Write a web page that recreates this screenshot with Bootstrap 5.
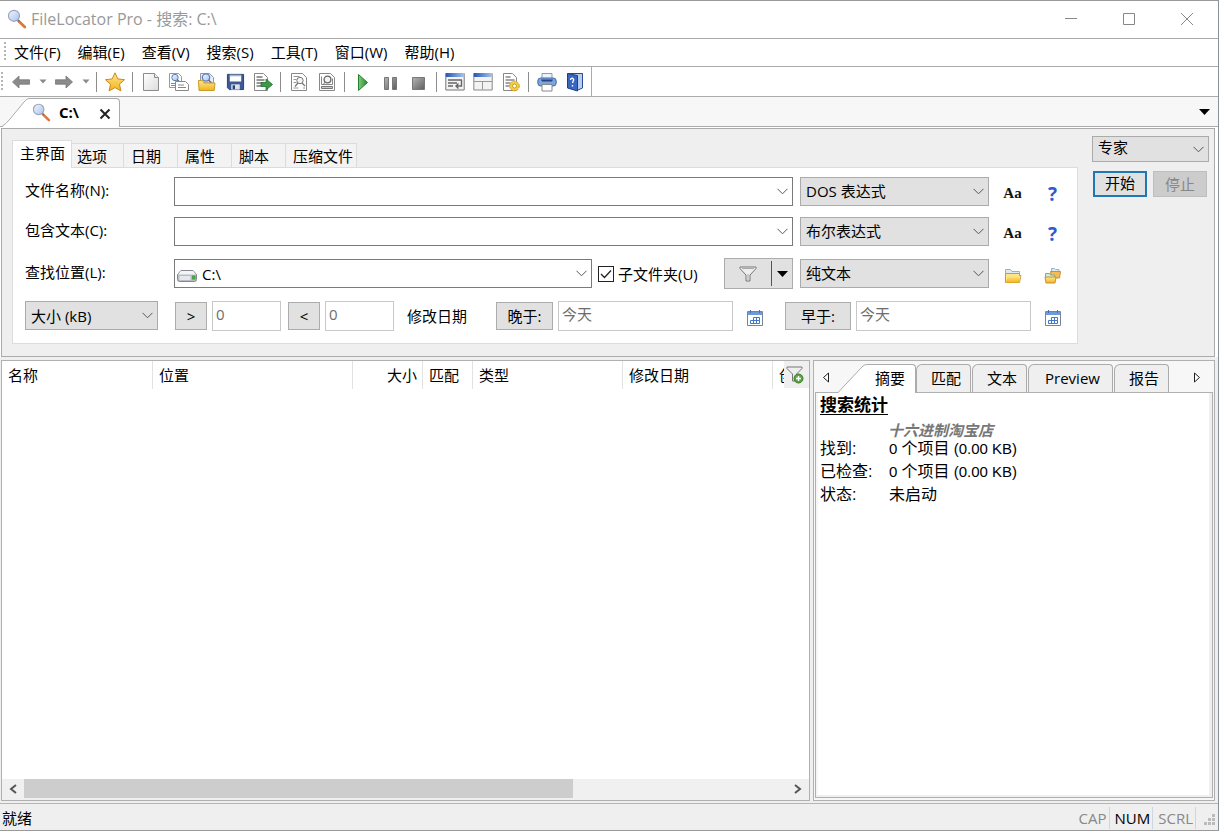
<!DOCTYPE html>
<html lang="zh-CN">
<head>
<meta charset="utf-8">
<meta name="viewport" content="width=device-width, initial-scale=1">
<title>FileLocator Pro - 搜索: C:\</title>
<link href="https://cdn.jsdelivr.net/npm/bootstrap@5.3.0/dist/css/bootstrap.min.css" rel="stylesheet">
<style>
:root { --edge:#ababab; --face:#efefef; --ctl:#e1e1e1; }
body { font:15px/20px "Open Sans","Noto Sans CJK SC",sans-serif; color:#000; background:#fff; }
button, input, select { font:inherit; color:#000; border-radius:0; }
svg { display:block; flex:none; }
.app { min-height:100vh; border:1px solid #999; border-left:0; border-right-color:#8a8f98; }
.bare { background:none; border:0; padding:0; display:flex; align-items:center; justify-content:center; }
/* title, menu and tool bars */
.title-bar { height:38px; padding:0 2px 2px 7px; color:#999; border-bottom:1px solid var(--edge); }
.app-title { font-size:16px; }
.title-bar .bare { width:58px; height:36px; }
.menu-bar { height:28px; border-bottom:1px solid var(--edge); gap:17px; padding:0 0 2px 4px; }
.menu-bar a { color:#000; text-decoration:none; }
.menu-bar .grip { margin-right:-9px; }
.grip { width:2px; height:20px; background:repeating-linear-gradient(#b5b5b5 0 2px,transparent 2px 4px); flex:none; }
.tool-bar { height:30px; border-bottom:1px solid var(--edge); }
.tool-set { height:29px; padding:0 2px 0 1px; border-right:1px solid var(--edge); }
.tool-set .bare { width:28px; height:28px; }
.tool-set .bare.drop { width:15px; }
.vsep { width:1px; height:20px; margin:0 4px 0 3px; background:#8c8c8c; flex:none; }
/* slanted document tab */
.doc-bar { height:30px; background:#f7f7f7; border-bottom:1px solid var(--edge); padding:1px 8px 0 2px; }
.slant-body { background:#fff; border:1px solid var(--edge); border-width:1px 1px 0 0; border-radius:0 4px 0 0; }
.doc-tab { height:29px; margin-bottom:-1px; }
.doc-tab .slant-body { width:91px; height:29px; padding-bottom:2px; }
/* criteria */
.search-area { background:var(--face); border:1px solid var(--edge); margin:1px 3px 0 1px; padding:7px 5px 12px 10px; gap:14px; }
.crit-tabs { height:31px; padding-top:7px; }
.crit-tabs .form-tab { height:24px; padding:0 3px 0 7px; min-width:54px; text-align:left; background:#f3f3f3; border:1px solid #dcdcdc; border-width:1px 1px 0 0; }
.crit-tabs .form-tab.active { min-width:60px; height:28px; background:#fff; border-left-width:1px; padding:0 4px 3px 7px; margin:-3px -2px 0 0; position:relative; }
.crit-box { background:#fff; border:1px solid #dcdcdc; padding:9px 6px 13px 12px; gap:11px; }
.crit-row { height:29px; }
.crit-row.loose { margin-top:2px; }
.row-label { width:149px; padding-bottom:3px; flex:none; }
.combo { height:29px; border:1px solid #7a7a7a; background:#fff; }
.combo input { border:0; outline:0; padding:0 6px; min-width:0; height:26px; background:transparent; }
.combo .bare { width:20px; }
.pick { appearance:none; border:1px solid var(--edge); background:var(--ctl) url("data:image/svg+xml,%3Csvg xmlns='http://www.w3.org/2000/svg' width='11' height='7'%3E%3Cpath d='M.5 .8l5 5 5-5' fill='none' stroke='%23555'/%3E%3C/svg%3E") no-repeat right 4px center; height:29px; padding:0 18px 0 5px; flex:none; }
.pick.mode { width:189px; margin:0 2px 0 7px; padding-bottom:2px; }
.push { background:var(--ctl); border:1px solid #acacac; height:28px; padding:0; flex:none; }
.crit-row .cell { width:40px; flex:none; height:29px; padding:4px 0 0 3px; }
.aa { font:bold 15px "Liberation Serif",serif; color:#111; }
.quest { font:bold 19px "Open Sans",sans-serif; color:#2f5bd0; }
.field { border:1px solid #c8c8c8; background:#fff; height:30px; padding:0 3px 4px; color:#6d6d6d; }
.field::placeholder { color:#6d6d6d; opacity:1; }
.tick { appearance:none; width:16px; height:16px; margin:0; border:1px solid #222; background:#fff; flex:none; }
.tick:checked { background:#fff url("data:image/svg+xml,%3Csvg xmlns='http://www.w3.org/2000/svg' width='14' height='14'%3E%3Cpath d='M2 7l3.5 3.5L12 3.5' fill='none' stroke='%23222' stroke-width='1.3'/%3E%3C/svg%3E") center no-repeat; }
.side { width:117px; flex:none; }
.side .pick { height:26px; padding-bottom:4px; }
.start { width:54px; height:26px; border:2px solid #2077b5; padding-bottom:2px; }
.stop { width:54px; height:26px; background:#ccc; border:1px solid #bfbfbf; color:#888; }
/* results */
.work { background:var(--face); padding:3px 3px 2px 1px; gap:3px; min-height:300px; }
.results { border:1px solid #b0b0b0; background:#fff; min-width:0; }
.head-wrap { position:relative; height:28px; overflow:hidden; }
.cols { table-layout:fixed; width:100%; border-collapse:separate; border-spacing:0; }
.cols th { font-weight:400; height:28px; padding:0 5px 0 6px; border-right:1px solid #e2e2e2; white-space:nowrap; overflow:hidden; }
.cols th:last-child { border:0; }
.filter-btn { position:absolute; right:0; top:0; width:25px; height:27px; padding-right:3px; background:var(--face) !important; }
.hscroll { height:21px; background:#f0f0f0; }
.hscroll .bare { width:22px; height:19px; }
.track { height:19px; }
.thumb { width:72%; height:19px; background:#cdcdcd; }
.preview { width:402px; border:1px solid #b0b0b0; background:#f7f7f7; flex:none; }
.pv-tabs { height:31px; padding-top:3px; }
.pv-tab { height:28px; background:var(--face); border:1px solid var(--edge); border-bottom:0; border-radius:6px 4px 0 0; padding:0 9px 2px 14px; margin-right:1px; }
.pv-tab.roomy { padding:0 12px 2px 16px; }
.pv-tabs .slant-body { height:29px; width:49px; border-bottom:0; padding:0 0 3px 8px; text-align:left; }
.pv-body { border:1px solid #b0b0b0; margin:0 1px 2px 1px; background:#fff; padding:1px 4px; font:15px/23px "Liberation Sans","Noto Sans CJK SC",sans-serif; box-shadow:inset -3px -2px 0 var(--face), inset 2px 0 0 #f5f5f5; }
.pv-body h2 { font:bold 17px/20px "Noto Sans CJK SC",sans-serif; text-decoration:underline; text-underline-offset:3px; margin:0 0 9px; }
.pv-note { font:italic bold 15px/14px "Noto Sans CJK SC",sans-serif; color:#777; padding-left:68px; }
.han { font-size:16px; }
.stats { display:grid; grid-template-columns:69px 1fr; margin:0; }
.stats dt { font-weight:400; font-size:16px; }
.stats dd { margin:0; }
.status { height:27px; background:var(--face); border-top:1px solid #b5b5b5; padding:2px 2px 0; }
.flag { color:#888; padding:0 2px 0 5px; border-right:1px solid #cfd5de; height:22px; line-height:22px; }
.flag.on { color:#000; }
</style>
</head>
<body>
<svg width="0" height="0" class="position-absolute" aria-hidden="true">
  <defs>
    <linearGradient id="gLens" x2="1" y2="1"><stop stop-color="#f2f6ff"/><stop offset="1" stop-color="#a9c2ec"/></linearGradient>
    <linearGradient id="gGray" x2="1" y2="1"><stop stop-color="#b5b5b5"/><stop offset="1" stop-color="#5e5e5e"/></linearGradient>
    <linearGradient id="gGold" x2="0" y2="1"><stop stop-color="#ffe98a"/><stop offset="1" stop-color="#f3b21c"/></linearGradient>
    <linearGradient id="gGreen" x2="1" y2="0"><stop stop-color="#83c983"/><stop offset="1" stop-color="#248a24"/></linearGradient>
    <linearGradient id="gPage" x2="1" y2="1"><stop stop-color="#fff"/><stop offset="1" stop-color="#dcdcdc"/></linearGradient>
    <linearGradient id="gBlue" x2="1"><stop stop-color="#2456b4"/><stop offset="1" stop-color="#a8c3ef"/></linearGradient>
  </defs>
  <symbol id="lens" viewBox="0 0 20 20"><path d="M11.500 12l6.300 6" stroke="#d9793c" stroke-width="2.800" stroke-linecap="round"/><path d="M10.500 10.500l2 2" stroke="#777" stroke-width="1.500"/><circle cx="7" cy="6.800" r="5.500" fill="url(#gLens)" stroke="#9aa4ba" stroke-width="1.200"/></symbol>
  <symbol id="back" viewBox="0 0 20 20"><path d="M1.500 10L8 4v3.800h10.500v4.400H8V16z" fill="#8b8b8b" stroke="#777" stroke-width=".8"/></symbol>
  <symbol id="fwd" viewBox="0 0 20 20"><path d="M18.500 10L12 4v3.800H1.500v4.400H12V16z" fill="#8b8b8b" stroke="#777" stroke-width=".8"/></symbol>
  <symbol id="caret" viewBox="0 0 8 5"><path d="M.5 .5h7L4 4.500z" fill="#8a8a8a"/></symbol>
  <symbol id="star" viewBox="0 0 20 20"><path d="M10 .8l2.800 6.100 6.700.8-5 4.500 1.400 6.700L10 15.600l-5.900 3.300 1.400-6.700-5-4.500 6.700-.8z" fill="url(#gGold)" stroke="#c98a17"/></symbol>
  <symbol id="page" viewBox="0 0 20 20"><path d="M2.500 1.500h11l4 4v13h-15z" fill="url(#gPage)" stroke="#8b8b8b"/><path d="M13.500 1.500v4h4" fill="#eee" stroke="#8b8b8b"/></symbol>
  <symbol id="pagefind" viewBox="0 0 20 20"><path d="M.5 1.500h9l3 3v11h-12z" fill="#fff" stroke="#999"/><path d="M2 11.500h4M2 13.500h4" stroke="#888"/><circle cx="6" cy="5.500" r="3.200" fill="url(#gLens)" stroke="#5a7db8"/><path d="M8.300 7.800l2 2" stroke="#5a6a8a" stroke-width="1.500"/><path d="M6.500 9.500h10l3 3v6h-13z" fill="#fff" stroke="#888"/><path d="M9 13h6M9 15.500h8" stroke="#888"/></symbol>
  <symbol id="folderfind" viewBox="0 0 20 20"><path d="M3.500 11V1.500h9l4 4V11z" fill="#e8eefb" stroke="#999"/><circle cx="9" cy="5.500" r="3.700" fill="url(#gLens)" stroke="#5b7fc4" stroke-width="1.300"/><path d="M11.500 8l3 3" stroke="#667" stroke-width="1.500"/><path d="M2 18.500l-.5-10h4l1.500 2.500h11l-.8 7.500z" fill="url(#gGold)" stroke="#c99b2e"/></symbol>
  <symbol id="floppy" viewBox="0 0 20 20"><path d="M1.500 2.500h17v16h-15l-2-2z" fill="#3d5a96" stroke="#283e6b"/><path d="M4 3h12v7H4z" fill="#fff"/><path d="M4 3h12v1.500H4z" fill="#9bb4de"/><path d="M5.500 13h9v5.500h-9z" fill="#dce2ec"/><path d="M7 14h2.500v4H7z" fill="#2a3f6c"/></symbol>
  <symbol id="export" viewBox="0 0 20 20"><path d="M1.500 1.500h9l4 4v13h-13z" fill="#fff" stroke="#888"/><path d="M3.500 5h6M3.500 8h8M3.500 11h7M3.500 14h7" stroke="#777" stroke-width="1.300"/><path d="M8 10.500h5V7l6.500 5.500L13 18v-3.500H8z" fill="#3a9a45" stroke="#227230" stroke-width=".8"/></symbol>
  <symbol id="pgmag" viewBox="0 0 20 20"><path d="M2.500 1.500h11l4 4v13h-15z" fill="#fff" stroke="#888"/><path d="M4.500 4.500h6M4.500 7.500h3M4.500 10.500h3M4.500 16h5M14 16h2" stroke="#999"/><circle cx="11" cy="8.500" r="3.200" fill="#f4f4f4" stroke="#777"/><path d="M9 11l-3 3.500M13 11l3 3" stroke="#777" stroke-width="1.300"/></symbol>
  <symbol id="pgmag2" viewBox="0 0 20 20"><path d="M2.500 1.500h11l4 4v13h-15z" fill="#fff" stroke="#888"/><path d="M4.500 4.500v8h11v-6" fill="none" stroke="#888"/><circle cx="10.500" cy="7.500" r="3.400" fill="#f4f4f4" stroke="#666" stroke-width="1.300"/><path d="M8.500 10L6 12.500M4.500 14.500h11v2h-11z" stroke="#777" fill="#ccc"/></symbol>
  <symbol id="play" viewBox="0 0 20 20"><path d="M5.500 2.500l9 8-9 8z" fill="url(#gGreen)" stroke="#277f2b"/></symbol>
  <symbol id="pause" viewBox="0 0 20 20"><path d="M3.500 5.500h4v12h-4zM11.500 5.500h4v12h-4z" fill="url(#gGray)" stroke="#777"/></symbol>
  <symbol id="stopsq" viewBox="0 0 20 20"><path d="M3.500 5.500h12v12h-12z" fill="url(#gGray)" stroke="#777"/></symbol>
  <symbol id="winwrap" viewBox="0 0 20 20"><path d="M.8 1.500h18.400v16.500H.8z" fill="#f3f3f3" stroke="#777"/><path d="M.8 1h18.400v4H.8z" fill="url(#gBlue)"/><path d="M3 8h14M3 11h9M3 14h5M16.500 8v6H11M13.500 11.500L11 14l2.500 2.500" fill="none" stroke="#666" stroke-width="1.400"/></symbol>
  <symbol id="winsplit" viewBox="0 0 20 20"><path d="M.8 1.500h18.400v16.500H.8z" fill="#f3f3f3" stroke="#888"/><path d="M.8 1h18.400v4H.8z" fill="url(#gBlue)"/><path d="M1 9.500h18M9.500 9.500v8" stroke="#999"/></symbol>
  <symbol id="pagegear" viewBox="0 0 20 20"><path d="M2.500 1.500h9l4 4v13h-13z" fill="#fff" stroke="#888"/><path d="M4.500 5h5M4.500 8h9M4.500 11h5M4.500 14h4" stroke="#888" stroke-width="1.300"/><circle cx="13.500" cy="14" r="4.800" fill="#f4cf44" stroke="#c99b1e" stroke-dasharray="2 1"/><circle cx="13.500" cy="14" r="2" fill="#fff" stroke="#c99b1e"/></symbol>
  <symbol id="printer" viewBox="0 0 20 20"><path d="M5 1.500h10V7H5z" fill="#eef3fb" stroke="#8a9bb5"/><rect x=".8" y="6" width="18.400" height="8" rx="3" fill="#7da6e0" stroke="#47699f"/><path d="M4 7.500h12l-1 2H5z" fill="#24477f"/><path d="M5 12.500h10v6.500H5z" fill="#fff" stroke="#888"/></symbol>
  <symbol id="book" viewBox="0 0 20 20"><path d="M3 1.500h14.500V16L13 18z" fill="#b9cdf0" stroke="#284a92"/><path d="M2.500 1.500l10 2v15.500l-10-3z" fill="#3767be" stroke="#213f85"/><path d="M5.500 8q.3-2 2-1.700Q9.500 7 8 9.500L7.500 11M7.500 13v1.500" fill="none" stroke="#fff" stroke-width="1.400"/></symbol>
  <symbol id="chev" viewBox="0 0 11 7"><path d="M.5 .8l5 5 5-5" fill="none" stroke="#555"/></symbol>
  <symbol id="funnel" viewBox="0 0 18 16"><path d="M1 1h16v1.500L11 9v6H7V9L1 2.500z" fill="#eee" stroke="#777"/><path d="M3 2.500h12M9 8v6" stroke="#aaa"/></symbol>
  <symbol id="drive" viewBox="0 0 20 14"><path d="M4 1.500h12l3.500 4v5q0 2-2 2h-15q-2 0-2-2v-5z" fill="#b9bcc5" stroke="#85888f"/><path d="M4 2h12l3 3.500H1z" fill="#f4f5f8"/><path d="M2.500 7h11v4h-11z" fill="#e5e8ef"/><path d="M15 6.500h3.500v4H15z" fill="#4ba53f"/></symbol>
  <symbol id="cal" viewBox="0 0 16 16"><path d="M.5 1.500h15v14H.5z" fill="#fff" stroke="#75839c"/><path d="M1 2h14v3H1z" fill="#6f98de"/><path d="M3.500 0v3M12.500 0v3" stroke="#536da0"/><path d="M6.500 7.500h6v3h-6zM3.500 10.500h6v3h-6zM9.500 7.500v3M6.500 10.500v3M9.500 10.500h3v3h-3" fill="none" stroke="#3d78ca"/></symbol>
  <symbol id="folder" viewBox="0 0 18 16"><path d="M1.500 14V1.500h5l1.500 2h7.500V7" fill="#dcebf5" stroke="#9db1ba"/><path d="M1.500 14.500V5.500h14v2h1.500l-1.500 7z" fill="#ffe48c" stroke="#c99b3c"/><path d="M2 14.500l1.500-6.500h13l-1.500 6.500z" fill="url(#gGold)"/></symbol>
  <symbol id="folders" viewBox="0 0 18 16"><path d="M7.500 9V.5h3l1 1H15V5" fill="#dcebf5" stroke="#9db1ba"/><path d="M6.500 3.500h10l-1 6.500h-8z" fill="#f2bd55" stroke="#c98f3a"/><path d="M1.500 12V5.500h4l1 1.500h4v2" fill="#cfeedd" stroke="#7cab94"/><path d="M1 9h11l-1 6H2z" fill="url(#gGold)" stroke="#c98f3a"/></symbol>
  <symbol id="filteradd" viewBox="0 0 18 18"><path d="M1 1h15v1.500L10.500 8v7h-4V8L1 2.500z" fill="#eee" stroke="#777"/><circle cx="12.500" cy="12.500" r="4.500" fill="#56a63d" stroke="#3a7d29"/><path d="M12.500 10v5M10 12.500h5" stroke="#fff" stroke-width="1.500"/></symbol>
</svg>

<div class="app d-flex flex-column">
  <header class="title-bar d-flex align-items-center">
    <svg width="20" height="20"><use href="#lens"/></svg>
    <span class="app-title ms-1 me-auto">FileLocator Pro - 搜索: C:\</span>
    <button class="bare" aria-label="最小化"><svg width="12" height="12"><path d="M0 5.500h12" stroke="#888"/></svg></button>
    <button class="bare" aria-label="最大化"><svg width="12" height="12"><path d="M.5 .5h11v11H.5z" fill="none" stroke="#888"/></svg></button>
    <button class="bare" aria-label="关闭"><svg width="12" height="12"><path d="M0 0l12 12M12 0L0 12" stroke="#888"/></svg></button>
  </header>

  <nav class="menu-bar d-flex align-items-center">
    <span class="grip"></span>
    <a href="#">文件(F)</a><a href="#">编辑(E)</a><a href="#">查看(V)</a><a href="#">搜索(S)</a><a href="#">工具(T)</a><a href="#">窗口(W)</a><a href="#">帮助(H)</a>
  </nav>

  <div class="tool-bar d-flex">
    <div class="tool-set d-flex align-items-center" role="toolbar" aria-label="工具栏">
      <span class="grip me-1"></span>
      <button class="bare" aria-label="后退"><svg width="20" height="20"><use href="#back"/></svg></button>
      <button class="bare drop" aria-label="后退历史"><svg width="8" height="5"><use href="#caret"/></svg></button>
      <button class="bare" aria-label="前进"><svg width="20" height="20"><use href="#fwd"/></svg></button>
      <button class="bare drop" aria-label="前进历史"><svg width="8" height="5"><use href="#caret"/></svg></button>
      <span class="vsep"></span>
      <button class="bare" aria-label="收藏"><svg width="20" height="20"><use href="#star"/></svg></button>
      <span class="vsep"></span>
      <button class="bare" aria-label="新建"><svg width="20" height="20"><use href="#page"/></svg></button>
      <button class="bare" aria-label="新建搜索"><svg width="20" height="20"><use href="#pagefind"/></svg></button>
      <button class="bare" aria-label="打开"><svg width="20" height="20"><use href="#folderfind"/></svg></button>
      <button class="bare" aria-label="保存"><svg width="19" height="19"><use href="#floppy"/></svg></button>
      <button class="bare" aria-label="导出"><svg width="20" height="20"><use href="#export"/></svg></button>
      <span class="vsep"></span>
      <button class="bare" aria-label="查找"><svg width="20" height="20"><use href="#pgmag"/></svg></button>
      <button class="bare" aria-label="预览"><svg width="20" height="20"><use href="#pgmag2"/></svg></button>
      <span class="vsep"></span>
      <button class="bare" aria-label="运行"><svg width="20" height="20"><use href="#play"/></svg></button>
      <button class="bare" aria-label="暂停"><svg width="20" height="20"><use href="#pause"/></svg></button>
      <button class="bare" aria-label="终止"><svg width="20" height="20"><use href="#stopsq"/></svg></button>
      <span class="vsep"></span>
      <button class="bare" aria-label="自动换行"><svg width="20" height="20"><use href="#winwrap"/></svg></button>
      <button class="bare" aria-label="布局"><svg width="20" height="20"><use href="#winsplit"/></svg></button>
      <button class="bare" aria-label="配置"><svg width="20" height="20"><use href="#pagegear"/></svg></button>
      <span class="vsep"></span>
      <button class="bare" aria-label="打印"><svg width="20" height="20"><use href="#printer"/></svg></button>
      <button class="bare" aria-label="帮助"><svg width="20" height="20"><use href="#book"/></svg></button>
    </div>
  </div>

  <div class="doc-bar d-flex align-items-center">
    <div class="doc-tab d-flex me-auto">
      <svg width="27" height="29"><path d="M0 29Q4 26 8 20L22 4Q25 .5 27 .5V29z" fill="#fff"/><path d="M0 28.500Q4 26 8 21L22 4Q25 .5 27 .5" fill="none" stroke="#ababab"/></svg>
      <div class="slant-body d-flex align-items-center">
        <svg style="margin-left:3px" width="19" height="19"><use href="#lens"/></svg>
        <strong class="me-auto ms-2">C:\</strong>
        <button class="bare me-2" aria-label="关闭标签"><svg class="mt-1" width="12" height="12"><path d="M1.500 1.500l9 9M10.500 1.500l-9 9" stroke="#222" stroke-width="2"/></svg></button>
      </div>
    </div>
    <button class="bare" aria-label="标签列表"><svg width="11" height="6"><path d="M0 0h11L5.500 6z"/></svg></button>
  </div>

  <section class="search-area d-flex align-items-start">
    <div class="flex-grow-1">
      <div class="crit-tabs d-flex align-items-start" role="tablist">
        <button class="form-tab active" role="tab">主界面</button><button class="form-tab" role="tab">选项</button><button class="form-tab" role="tab">日期</button><button class="form-tab" role="tab">属性</button><button class="form-tab" role="tab">脚本</button><button class="form-tab" role="tab">压缩文件</button>
      </div>
      <div class="crit-box d-flex flex-column">
        <div class="crit-row d-flex align-items-center">
          <label class="row-label" for="fName">文件名称(N):</label>
          <div class="combo d-flex flex-grow-1"><input id="fName" class="flex-grow-1"><button class="bare" aria-label="展开"><svg width="11" height="7"><use href="#chev"/></svg></button></div>
          <select class="pick mode" aria-label="文件名表达式"><option>DOS 表达式</option></select>
          <button class="bare cell aa" aria-label="区分大小写">Aa</button><button class="bare cell quest" aria-label="文件名帮助">?</button>
        </div>
        <div class="crit-row d-flex align-items-center">
          <label class="row-label" for="fText">包含文本(C):</label>
          <div class="combo d-flex flex-grow-1"><input id="fText" class="flex-grow-1"><button class="bare" aria-label="展开"><svg width="11" height="7"><use href="#chev"/></svg></button></div>
          <select class="pick mode" aria-label="文本表达式"><option>布尔表达式</option></select>
          <button class="bare cell aa" aria-label="区分大小写">Aa</button><button class="bare cell quest" aria-label="文本帮助">?</button>
        </div>
        <div class="crit-row loose d-flex align-items-center">
          <label class="row-label" for="fLook">查找位置(L):</label>
          <div class="combo d-flex flex-grow-1 align-items-center"><svg class="mt-1" style="margin-left:2px" width="20" height="14"><use href="#drive"/></svg><input id="fLook" class="flex-grow-1" value="C:\" style="padding-left:5px"><button class="bare" aria-label="展开"><svg width="11" height="7"><use href="#chev"/></svg></button></div>
          <span class="d-flex align-items-center" style="width:132px;padding-left:6px"><input type="checkbox" class="tick" id="sub" checked><label for="sub" class="ps-1">子文件夹(U)</label></span>
          <div class="push d-flex" style="width:69px;height:31px"><button class="bare flex-grow-1" aria-label="筛选"><svg width="18" height="16"><use href="#funnel"/></svg></button><span class="my-auto" style="width:1px;height:25px;background:#555"></span><button class="bare" style="width:20px" aria-label="筛选菜单"><svg width="11" height="6"><path d="M0 0h11L5.500 6z"/></svg></button></div>
          <select class="pick mode" aria-label="文件类型"><option>纯文本</option></select>
          <button class="bare cell" aria-label="浏览文件夹"><svg width="18" height="16"><use href="#folder"/></svg></button><button class="bare cell" aria-label="多个文件夹"><svg width="18" height="16"><use href="#folders"/></svg></button>
        </div>
        <div class="crit-row loose d-flex align-items-center">
          <select class="pick" style="width:133px;margin-right:17px" aria-label="大小单位"><option>大小 (kB)</option></select>
          <button class="push" style="width:32px">&gt;</button>
          <input class="field" style="width:69px;margin:0 7px 0 5px" placeholder="0" aria-label="最小大小">
          <button class="push" style="width:32px">&lt;</button>
          <input class="field" style="width:69px;margin:0 13px 0 5px" placeholder="0" aria-label="最大大小">
          <span style="width:89px">修改日期</span>
          <button class="push" style="width:57px">晚于:</button>
          <input class="field flex-grow-1" style="width:0;margin-left:5px" placeholder="今天" aria-label="晚于日期">
          <button class="bare cell" style="margin-right:12px" aria-label="选择日期"><svg width="16" height="16"><use href="#cal"/></svg></button>
          <button class="push" style="width:66px">早于:</button>
          <input class="field flex-grow-1" style="width:0;margin-left:5px" placeholder="今天" aria-label="早于日期">
          <button class="bare cell" aria-label="选择日期"><svg width="16" height="16"><use href="#cal"/></svg></button>
        </div>
      </div>
    </div>
    <div class="side">
      <select class="pick w-100" aria-label="模式"><option>专家</option></select>
      <div class="d-flex justify-content-between" style="padding:9px 2px 0 1px"><button class="push start">开始</button><button class="push stop" disabled>停止</button></div>
    </div>
  </section>

  <main class="work d-flex flex-grow-1">
    <section class="results d-flex flex-column flex-grow-1">
      <div class="head-wrap">
        <table class="cols">
          <colgroup><col style="width:151px"><col style="width:200px"><col style="width:70px"><col style="width:50px"><col style="width:150px"><col style="width:150px"><col></colgroup>
          <thead><tr><th>名称</th><th>位置</th><th class="text-end">大小</th><th>匹配</th><th>类型</th><th>修改日期</th><th>创建日期</th></tr></thead>
        </table>
        <button class="bare filter-btn" aria-label="添加筛选"><svg width="18" height="18"><use href="#filteradd"/></svg></button>
      </div>
      <div class="hscroll d-flex mt-auto">
        <button class="bare" aria-label="向左滚动"><svg width="8" height="10"><path d="M7 1L2 5l5 4" fill="none" stroke="#555" stroke-width="2"/></svg></button>
        <div class="track flex-grow-1"><div class="thumb"></div></div>
        <button class="bare" aria-label="向右滚动"><svg width="8" height="10"><path d="M1 1l5 4-5 4" fill="none" stroke="#555" stroke-width="2"/></svg></button>
      </div>
    </section>
    <section class="preview d-flex flex-column">
      <div class="pv-tabs d-flex align-items-start" role="tablist">
        <button class="bare" style="width:24px;height:27px" aria-label="向左"><svg width="8" height="11"><path d="M6.500 1v9L1.500 5.500z" fill="#fff" stroke="#222"/></svg></button>
        <div class="d-flex position-relative"><svg width="29" height="29"><path d="M0 29L24 3Q26 .5 29 .5V29z" fill="#fff"/><path d="M0 28.500L24 3Q26 .5 29 .5" fill="none" stroke="#ababab"/></svg><button class="slant-body" role="tab">摘要</button></div>
        <button class="pv-tab" role="tab">匹配</button><button class="pv-tab" role="tab">文本</button><button class="pv-tab roomy" role="tab">Preview</button><button class="pv-tab" role="tab">报告</button>
        <button class="bare ms-auto" style="width:34px;height:27px" aria-label="向右"><svg width="8" height="11"><path d="M1.500 1v9l5-4.500z" fill="#fff" stroke="#222"/></svg></button>
      </div>
      <div class="pv-body flex-grow-1">
        <h2>搜索统计</h2>
        <div class="pv-note">十六进制淘宝店</div>
        <dl class="stats"><dt>找到:</dt><dd>0 <span class="han">个项目</span> (0.00 KB)</dd><dt>已检查:</dt><dd>0 <span class="han">个项目</span> (0.00 KB)</dd><dt>状态:</dt><dd class="han">未启动</dd></dl>
      </div>
    </section>
  </main>

  <footer class="status d-flex align-items-center">
    <span class="me-auto">就绪</span>
    <span class="flag">CAP</span><span class="flag on">NUM</span><span class="flag">SCRL</span>
    <svg class="ms-2 mt-auto mb-1" width="12" height="12"><path d="M8 0h3v3H8zM4 4h3v3H4zM8 4h3v3H8zM0 8h3v3H0zM4 8h3v3H4zM8 8h3v3H8z" fill="#bbb"/></svg>
  </footer>
</div>
<script src="https://cdn.jsdelivr.net/npm/bootstrap@5.3.0/dist/js/bootstrap.bundle.min.js"></script>
</body>
</html>
